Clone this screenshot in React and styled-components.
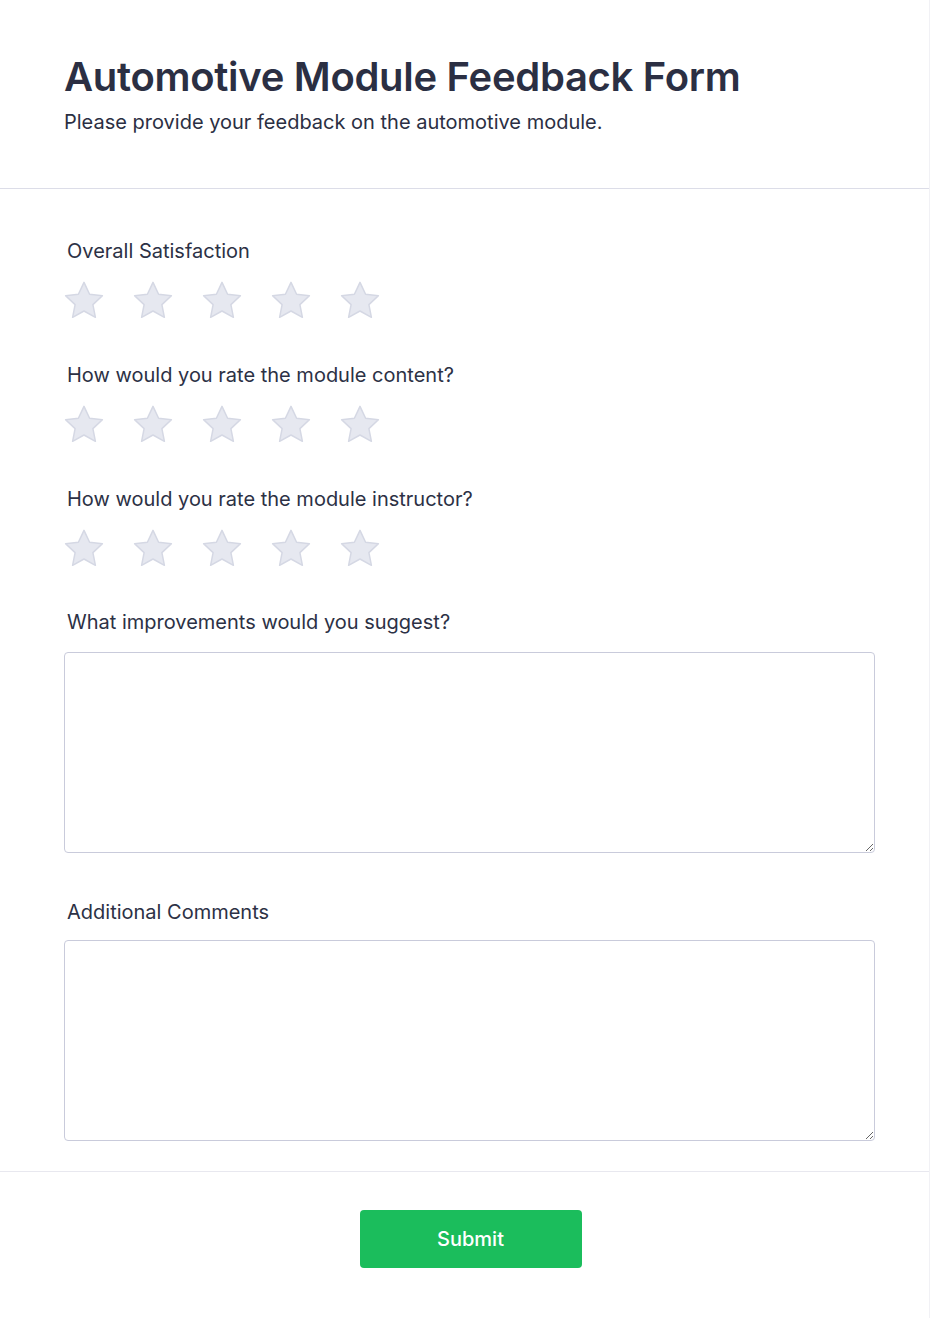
import styled, { createGlobalStyle } from "styled-components";

const GlobalStyle = createGlobalStyle`
  html, body {
    margin: 0;
    padding: 0;
    background: #ffffff;
  }
  body {
    font-family: Inter, "Noto Sans", sans-serif;
    color: #2c3145;
  }
  * { box-sizing: border-box; }
`;

const Card = styled.div`
  width: 930px;
  min-height: 1318px;
  background: #fff;
  border-right: 1px solid #f1f1f5;
  display: flex;
  flex-direction: column;
`;

const Header = styled.header`
  padding: 52px 64px 52px;
  border-bottom: 1px solid #dcdde8;
`;

const Title = styled.h1`
  margin: 0;
  font-size: 40px;
  line-height: 50px;
  font-weight: 600;
  color: #2b2f43;
  letter-spacing: -0.3px;
`;

const Subtitle = styled.p`
  margin: 7px 0 0;
  font-size: 20px;
  line-height: 27px;
  color: #2b2f43;
`;

const Body = styled.div`
  padding: 48px 54px 30px 64px;
  display: flex;
  flex-direction: column;
  border-bottom: 1px solid #e8e8ef;
`;

const Field = styled.div`
  display: flex;
  flex-direction: column;
  gap: ${(p) => p.$gap}px;
  margin-bottom: ${(p) => p.$after}px;
  &:last-child { margin-bottom: 0; }
`;

const Label = styled.label`
  font-size: 20px;
  line-height: 28px;
  padding-left: 3px;
  color: #2c3145;
`;

const Stars = styled.div`
  display: flex;
  gap: 29px;
`;

const StarButton = styled.button`
  width: 40px;
  height: 40px;
  padding: 0;
  border: 0;
  background: none;
  cursor: pointer;
  display: flex;
  align-items: center;
  justify-content: center;
`;

const TextArea = styled.textarea`
  width: 811px;
  height: 201px;
  border: 1px solid #c9cbdb;
  border-radius: 4px;
  resize: vertical;
  padding: 10px 12px;
  font-family: inherit;
  font-size: 16px;
  outline: none;
`;

const Footer = styled.footer`
  display: flex;
  justify-content: center;
  padding: 38px 0 50px 12px;
`;

const SubmitButton = styled.button`
  width: 222px;
  height: 58px;
  border: 0;
  border-radius: 4px;
  background: #1bbd5c;
  color: #fff;
  font-family: inherit;
  font-size: 20px;
  font-weight: 500;
  cursor: pointer;
`;

const Star = () => (
  <svg width="40" height="40" viewBox="2 2.2 20 20">
    <path
      d="M12 2.9l2.8 5.9 6.4.8-4.75 4.4 1.25 6.35L12 17.2l-5.7 3.15 1.25-6.35L2.8 9.6l6.4-.8z"
      fill="#e6e8f0"
      stroke="#d5d8e4"
      strokeWidth="0.75"
      strokeLinejoin="round"
    />
  </svg>
);

const ratings = [
  { label: "Overall Satisfaction", after: 40 },
  { label: "How would you rate the module content?", after: 40 },
  { label: "How would you rate the module instructor?", after: 39 },
];

const texts = [
  { label: "What improvements would you suggest?", gap: 16, after: 45 },
  { label: "Additional Comments", gap: 14, after: 0 },
];

export default function App() {
  return (
    <>
      <GlobalStyle />
      <Card>
        <Header>
          <Title>Automotive Module Feedback Form</Title>
          <Subtitle>Please provide your feedback on the automotive module.</Subtitle>
        </Header>
        <Body>
          {ratings.map((r) => (
            <Field key={r.label} $gap={16} $after={r.after}>
              <Label>{r.label}</Label>
              <Stars>
                {[1, 2, 3, 4, 5].map((n) => (
                  <StarButton key={n} type="button" aria-label={`${n} star`}>
                    <Star />
                  </StarButton>
                ))}
              </Stars>
            </Field>
          ))}
          {texts.map((t) => (
            <Field key={t.label} $gap={t.gap} $after={t.after}>
              <Label>{t.label}</Label>
              <TextArea />
            </Field>
          ))}
        </Body>
        <Footer>
          <SubmitButton type="button">Submit</SubmitButton>
        </Footer>
      </Card>
    </>
  );
}
